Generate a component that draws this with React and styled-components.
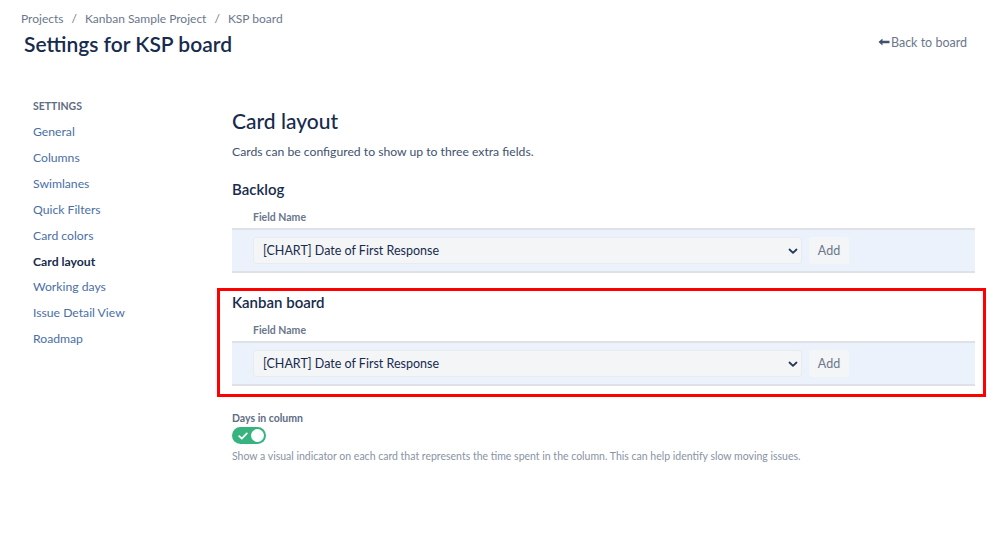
import React from "react";
import styled, { createGlobalStyle } from "styled-components";

const GlobalStyle = createGlobalStyle`
  html, body {
    margin: 0;
    padding: 0;
    background: #ffffff;
    font-family: Lato, "Open Sans", sans-serif;
    color: #172b4d;
  }
`;

const Page = styled.div`
  width: 998px;
  min-height: 539px;
  box-sizing: border-box;
`;

const Header = styled.header`
  padding: 10px 31px 0 21px;
`;

const Crumbs = styled.nav`
  display: flex;
  align-items: center;
  gap: 8px;
  font-size: 12px;
  line-height: 18px;
  color: #6b778c;
`;

const Sep = styled.span`
  color: #6b778c;
`;

const TitleRow = styled.div`
  display: flex;
  align-items: center;
  justify-content: space-between;
  margin-top: 2px;
`;

const Title = styled.h1`
  margin: 0 0 0 3px;
  font-size: 21px;
  line-height: 27px;
  font-weight: 600;
  color: #172b4d;
`;

const BackLink = styled.a`
  display: flex;
  align-items: center;
  gap: 1px;
  font-size: 12.5px;
  color: #6b778c;
  text-decoration: none;
  margin-top: -3px;
`;

const Body = styled.div`
  display: grid;
  grid-template-columns: 199px 1fr;
  padding: 41px 23px 0 33px;
`;

const Sidebar = styled.aside`
  display: flex;
  flex-direction: column;
`;

const SideHeading = styled.div`
  font-size: 10.5px;
  line-height: 16px;
  font-weight: 700;
  color: #5e6c84;
  margin-bottom: 5px;
`;

const SideItem = styled.a`
  font-size: 12.2px;
  line-height: 25.9px;
  color: ${(p) => (p.$active ? "#172b4d" : "#4a6fa5")};
  font-weight: ${(p) => (p.$active ? 700 : 400)};
  text-decoration: none;
`;

const Main = styled.main`
  display: flex;
  flex-direction: column;
  padding-top: 9px;
`;

const H2 = styled.h2`
  margin: 0;
  font-size: 21px;
  line-height: 28px;
  font-weight: 500;
  color: #172b4d;
`;

const Lead = styled.p`
  margin: 8px 0 0;
  font-size: 12.2px;
  line-height: 18px;
  color: #42526e;
`;

const H3 = styled.h3`
  margin: ${(p) => p.$top || "18px"} 0 0;
  font-size: 15px;
  line-height: 20px;
  font-weight: 600;
  color: #172b4d;
`;

const FieldLabel = styled.div`
  margin: 11px 0 0 21px;
  font-size: 10.5px;
  line-height: 14px;
  font-weight: 700;
  color: #6b778c;
`;

const FieldPanel = styled.div`
  margin-top: 4px;
  display: flex;
  align-items: center;
  gap: 7px;
  padding: 7px 21px 7px 21px;
  background: #ebf2fc;
  border-top: 2px solid #dfe1e6;
  border-bottom: 2px solid #dfe1e6;
`;

const Select = styled.div`
  box-sizing: border-box;
  width: 549px;
  height: 27px;
  display: flex;
  align-items: center;
  justify-content: space-between;
  padding: 0 0 0 9px;
  background: #f4f5f7;
  border: 1px solid #e9ebef;
  border-radius: 3px;
  font-size: 12.5px;
  color: #172b4d;
`;

const AddButton = styled.button`
  width: 40px;
  height: 27px;
  border: none;
  border-radius: 3px;
  background: #f4f5f7;
  color: #6b778c;
  font-family: inherit;
  font-size: 12.5px;
  padding: 0;
`;

const Highlight = styled.section`
  margin: 15px -11px 0 -15px;
  padding: 1px 8px 8px 12px;
  border: 3px solid #ff0000;
`;

const ToggleLabel = styled.div`
  margin-top: 14px;
  font-size: 10.5px;
  line-height: 14px;
  font-weight: 700;
  color: #5e6c84;
`;

const Toggle = styled.div`
  margin-top: 2px;
  width: 34px;
  height: 17px;
  border-radius: 9px;
  background: #36b37e;
  display: flex;
  align-items: center;
  justify-content: space-between;
  padding: 0 2px 0 6px;
  box-sizing: border-box;
`;

const Knob = styled.span`
  width: 13px;
  height: 13px;
  border-radius: 50%;
  background: #ffffff;
`;

const Hint = styled.p`
  margin: 5px 0 0;
  font-size: 10.5px;
  line-height: 14px;
  color: #8993a4;
`;

const Chevron = () => (
  <svg width="16" height="16" viewBox="0 0 16 16">
    <path d="M4.5 6.5 L8 9.8 L11.5 6.5" fill="none" stroke="#253858" strokeWidth="1.8" strokeLinecap="round" strokeLinejoin="round" />
  </svg>
);

const BackArrow = () => (
  <svg width="12" height="10" viewBox="0 0 12 10">
    <path d="M0.5 5 L4.5 1.5 V3.8 H11.5 V6.2 H4.5 V8.5 Z" fill="#42526e" />
  </svg>
);

const Check = () => (
  <svg width="10" height="8" viewBox="0 0 10 8">
    <path d="M1.2 4.2 L3.8 6.6 L8.8 1.4" fill="none" stroke="#ffffff" strokeWidth="1.8" strokeLinecap="round" strokeLinejoin="round" />
  </svg>
);

const FieldRow = () => (
  <>
    <FieldLabel>Field Name</FieldLabel>
    <FieldPanel>
      <Select>
        <span>[CHART] Date of First Response</span>
        <Chevron />
      </Select>
      <AddButton>Add</AddButton>
    </FieldPanel>
  </>
);

const navItems = [
  "General",
  "Columns",
  "Swimlanes",
  "Quick Filters",
  "Card colors",
  "Card layout",
  "Working days",
  "Issue Detail View",
  "Roadmap",
];

export default function App() {
  return (
    <Page>
      <GlobalStyle />
      <Header>
        <Crumbs>
          <span>Projects</span>
          <Sep>/</Sep>
          <span>Kanban Sample Project</span>
          <Sep>/</Sep>
          <span>KSP board</span>
        </Crumbs>
        <TitleRow>
          <Title>Settings for KSP board</Title>
          <BackLink href="#">
            <BackArrow />
            Back to board
          </BackLink>
        </TitleRow>
      </Header>
      <Body>
        <Sidebar>
          <SideHeading>SETTINGS</SideHeading>
          {navItems.map((item) => (
            <SideItem key={item} href="#" $active={item === "Card layout"}>
              {item}
            </SideItem>
          ))}
        </Sidebar>
        <Main>
          <H2>Card layout</H2>
          <Lead>Cards can be configured to show up to three extra fields.</Lead>
          <H3>Backlog</H3>
          <FieldRow />
          <Highlight>
            <H3 $top="0">Kanban board</H3>
            <FieldRow />
          </Highlight>
          <ToggleLabel>Days in column</ToggleLabel>
          <Toggle>
            <Check />
            <Knob />
          </Toggle>
          <Hint>
            Show a visual indicator on each card that represents the time spent in the column. This can help identify slow moving issues.
          </Hint>
        </Main>
      </Body>
    </Page>
  );
}
